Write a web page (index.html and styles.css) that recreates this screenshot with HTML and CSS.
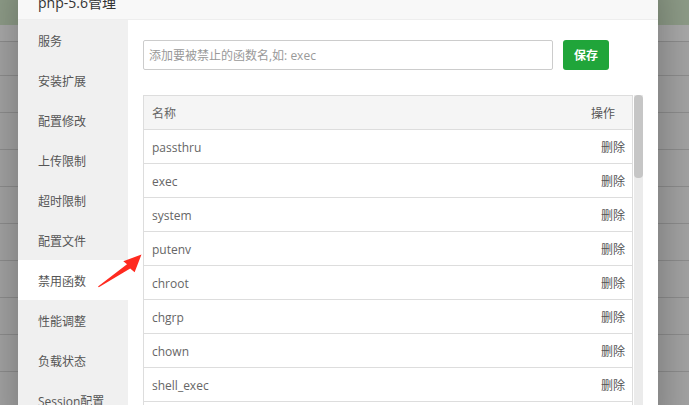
FILE: index.html
```html
<!DOCTYPE html>
<html lang="zh-CN">
<head>
<meta charset="utf-8">
<title>php-5.6管理</title>
<link rel="stylesheet" href="styles.css">
</head>
<body>
<div class="page">
  <div class="shade shade-left">
    <div class="shade-top"></div>
    <div class="shade-row r1"></div>
    <div class="shade-row r2"></div>
    <div class="shade-row"></div>
    <div class="shade-row"></div>
    <div class="shade-row"></div>
    <div class="shade-row"></div>
    <div class="shade-row"></div>
    <div class="shade-row"></div>
    <div class="shade-row"></div>
    <div class="shade-row"></div>
    <div class="shade-row"></div>
  </div>
  <div class="modal">
    <div class="modal-title">php-5.6管理</div>
    <div class="modal-body">
      <ul class="menu">
        <li>服务</li>
        <li>安装扩展</li>
        <li>配置修改</li>
        <li>上传限制</li>
        <li>超时限制</li>
        <li>配置文件</li>
        <li class="active">禁用函数</li>
        <li>性能调整</li>
        <li>负载状态</li>
        <li>Session配置</li>
      </ul>
      <div class="panel">
        <div class="form-row">
          <input class="fn-input" type="text" placeholder="添加要被禁止的函数名,如: exec">
          <button class="btn-save">保存</button>
        </div>
        <div class="list-wrap">
          <div class="fn-list">
            <div class="fn-row fn-head"><span class="c-name">名称</span><span class="c-op">操作</span></div>
            <div class="fn-row"><span class="c-name">passthru</span><span class="c-op">删除</span></div>
            <div class="fn-row"><span class="c-name">exec</span><span class="c-op">删除</span></div>
            <div class="fn-row"><span class="c-name">system</span><span class="c-op">删除</span></div>
            <div class="fn-row"><span class="c-name">putenv</span><span class="c-op">删除</span></div>
            <div class="fn-row"><span class="c-name">chroot</span><span class="c-op">删除</span></div>
            <div class="fn-row"><span class="c-name">chgrp</span><span class="c-op">删除</span></div>
            <div class="fn-row"><span class="c-name">chown</span><span class="c-op">删除</span></div>
            <div class="fn-row"><span class="c-name">shell_exec</span><span class="c-op">删除</span></div>
            <div class="fn-row"><span class="c-name">popen</span><span class="c-op">删除</span></div>
          </div>
          <div class="scrollbar"><div class="thumb"></div></div>
        </div>
      </div>
    </div>
  </div>
  <div class="shade shade-right">
    <div class="shade-top"></div>
    <div class="shade-row r1"></div>
    <div class="shade-row r2"></div>
    <div class="shade-row"></div>
    <div class="shade-row"></div>
    <div class="shade-row"></div>
    <div class="shade-row"></div>
    <div class="shade-row"></div>
    <div class="shade-row"></div>
    <div class="shade-row"></div>
    <div class="shade-row"></div>
    <div class="shade-row"></div>
  </div>
</div>
<svg class="arrow" width="689" height="405" viewBox="0 0 689 405" xmlns="http://www.w3.org/2000/svg">
  <polygon fill="#ff2a1f" points="98,286.5 127,264.3 123.3,261.3 141.5,254.5 134.6,272.2 130.2,268.6 98.8,287.3"/>
</svg>
</body>
</html>
```

FILE: styles.css
```css
html, body {
  margin: 0;
  padding: 0;
}
body {
  width: 689px;
  height: 405px;
  overflow: hidden;
  position: relative;
  font-family: "Open Sans", "Noto Sans CJK SC", sans-serif;
  font-size: 12px;
  color: #555;
  background: #a4a4a4;
}
.page {
  display: flex;
  align-items: flex-start;
  height: 405px;
}
.shade {
  display: flex;
  flex-direction: column;
  height: 405px;
  background: #a3a3a3;
}
.shade-left {
  width: 18px;
  flex: none;
}
.shade-right {
  flex: 1;
}
.shade-top {
  height: 25px;
  flex: none;
  background: #8e9c88;
}
.shade-row {
  flex: none;
  box-sizing: border-box;
  height: 37px;
  border-bottom: 1px solid #8d8d8d;
}
.shade-row.r1 {
  height: 17px;
  background: #a9a9a9;
}
.shade-row.r2 {
  height: 34px;
}
.modal {
  position: relative;
  z-index: 1;
  width: 640px;
  flex: none;
  margin-top: -22px;
  background: #fff;
  box-shadow: 1px 1px 40px rgba(0, 0, 0, 0.3);
}
.modal-title {
  height: 37px;
  padding: 4px 0 0 20px;
  line-height: 42px;
  font-size: 14px;
  color: #333;
  background: #f8f8f8;
  border-bottom: 1px solid #eee;
  overflow: hidden;
}
.modal-body {
  display: flex;
  height: 420px;
}
.menu {
  list-style: none;
  margin: 0;
  padding: 0;
  width: 110px;
  flex: none;
  background: #f0f0f0;
}
.menu li {
  height: 38px;
  padding: 2px 0 0 20px;
  line-height: 40px;
  color: #555;
}
.menu li.active {
  background: #fff;
}
.panel {
  flex: 1;
  padding: 20px 15px 0 15px;
}
.form-row {
  display: flex;
}
.fn-input {
  box-sizing: border-box;
  width: 410px;
  height: 30px;
  margin: 0;
  padding: 0 5px;
  border: 1px solid #ccc;
  border-radius: 2px;
  font-family: inherit;
  font-size: 12px;
  color: #555;
  outline: none;
}
.fn-input::placeholder {
  color: #999;
}
.btn-save {
  width: 46px;
  height: 30px;
  margin-left: 10px;
  padding: 0;
  border: none;
  border-radius: 3px;
  background: #20a53a;
  color: #fff;
  font-family: inherit;
  font-size: 12px;
  font-weight: bold;
}
.list-wrap {
  display: flex;
  margin-top: 25px;
  width: 500px;
}
.fn-list {
  width: 490px;
  box-sizing: border-box;
  border: 1px solid #ddd;
  border-bottom: none;
}
.fn-row {
  display: flex;
  align-items: center;
  justify-content: space-between;
  box-sizing: border-box;
  height: 34px;
  border-bottom: 1px solid #ddd;
  padding: 1px 7px 0 8px;
  color: #666;
}
.fn-head {
  background: #f5f5f5;
  padding-right: 17px;
}
.c-op {
  color: #555;
}
.scrollbar {
  width: 9px;
  margin-left: 1px;
  height: 320px;
  background: #ebebeb;
}
.thumb {
  height: 83px;
  border-radius: 4px;
  background: #c6c6c6;
}
.arrow {
  position: absolute;
  left: 0;
  top: 0;
  z-index: 5;
  pointer-events: none;
}
```
